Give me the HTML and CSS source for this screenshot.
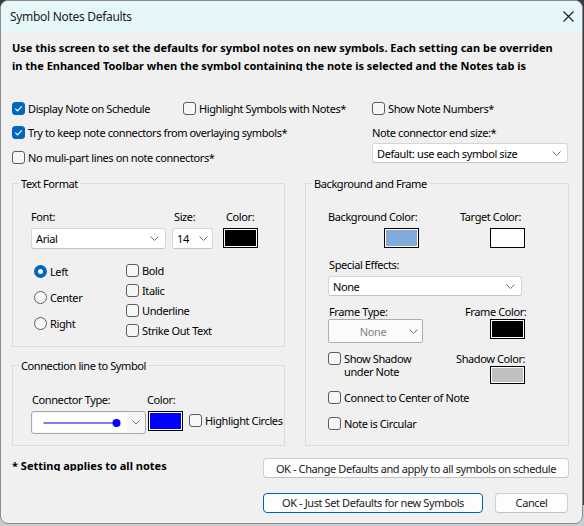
FILE: index.html
```html
<!DOCTYPE html>
<html>
<head>
<meta charset="utf-8">
<title>Symbol Notes Defaults</title>
<link rel="stylesheet" href="styles.css">
</head>
<body>
<div class="window">
  <div class="titlebar">
    <span class="title">Symbol Notes Defaults</span>
    <svg class="close" width="11" height="11" viewBox="0 0 11 11"><path d="M0.5 0.5 L10.5 10.5 M10.5 0.5 L0.5 10.5" stroke="#1b1b1b" stroke-width="1.1" fill="none"/></svg>
  </div>
  <div class="content">
    <div class="intro">Use this screen to set the defaults for symbol notes on new symbols. Each setting can be overriden<br>in the Enhanced Toolbar when the symbol containing the note is selected and the Notes tab is</div>

    <div class="opts">
      <div class="opts-left">
        <div class="row">
          <label class="chk w171"><span class="box on"><svg width="11" height="11" viewBox="0 0 11 11"><path d="M2.3 5.6 L4.5 7.8 L8.8 3.3" stroke="#fff" stroke-width="1.2" fill="none"/></svg></span>Display Note on Schedule</label>
          <label class="chk"><span class="box"></span>Highlight Symbols with Notes*</label>
        </div>
        <div class="row h25">
          <label class="chk"><span class="box on"><svg width="11" height="11" viewBox="0 0 11 11"><path d="M2.3 5.6 L4.5 7.8 L8.8 3.3" stroke="#fff" stroke-width="1.2" fill="none"/></svg></span>Try to keep note connectors from overlaying symbols*</label>
        </div>
        <div class="row h25">
          <label class="chk"><span class="box"></span>No muli-part lines on note connectors*</label>
        </div>
      </div>
      <div class="opts-right">
        <div class="row">
          <label class="chk"><span class="box"></span>Show Note Numbers*</label>
        </div>
        <div class="row">Note connector end size:*</div>
        <div class="combo sel-end"><span>Default: use each symbol size</span><svg class="chev" width="9" height="5" viewBox="0 0 9 5"><path d="M0.5 0.5 L4.5 4.5 L8.5 0.5" stroke="#707070" fill="none"/></svg></div>
      </div>
    </div>

    <div class="groups">
      <div class="col-left">
        <fieldset class="group tf">
          <legend>Text Format</legend>
          <div class="tf-top">
            <div class="field f-font">
              <div class="lbl">Font:</div>
              <div class="combo"><span>Arial</span><svg class="chev" width="9" height="5" viewBox="0 0 9 5"><path d="M0.5 0.5 L4.5 4.5 L8.5 0.5" stroke="#707070" fill="none"/></svg></div>
            </div>
            <div class="field f-size">
              <div class="lbl">Size:</div>
              <div class="combo"><span>14</span><svg class="chev" width="9" height="5" viewBox="0 0 9 5"><path d="M0.5 0.5 L4.5 4.5 L8.5 0.5" stroke="#707070" fill="none"/></svg></div>
            </div>
            <div class="field f-color">
              <div class="lbl">Color:</div>
              <div class="swatch black"></div>
            </div>
          </div>
          <div class="tf-bottom">
            <div class="radios">
              <label class="radio-row"><span class="radio on"></span>Left</label>
              <label class="radio-row"><span class="radio"></span>Center</label>
              <label class="radio-row"><span class="radio"></span>Right</label>
            </div>
            <div class="checks">
              <label class="chk check-row"><span class="box"></span>Bold</label>
              <label class="chk check-row"><span class="box"></span>Italic</label>
              <label class="chk check-row"><span class="box"></span>Underline</label>
              <label class="chk check-row"><span class="box"></span>Strike Out Text</label>
            </div>
          </div>
        </fieldset>

        <fieldset class="group conn">
          <legend>Connection line to Symbol</legend>
          <div class="conn-row">
            <div class="field f-ctype">
              <div class="lbl">Connector Type:</div>
              <div class="combo dark">
                <span class="line-item"><svg width="94" height="19" viewBox="0 0 94 19"><line x1="10.5" y1="10" x2="83" y2="10" stroke="#0000e0" stroke-width="1.2"/><circle cx="83.5" cy="10" r="4" fill="#0000ff"/></svg></span>
                <svg class="chev" width="8" height="5" viewBox="0 0 8 5"><path d="M0.5 0.5 L4 4 L7.5 0.5" stroke="#707070" fill="none"/></svg>
              </div>
            </div>
            <div class="field f-ccolor">
              <div class="lbl">Color:</div>
              <div class="swatch blue"></div>
            </div>
            <div class="field f-hl">
              <div class="lbl"></div>
              <label class="chk check-row"><span class="box"></span>Highlight Circles</label>
            </div>
          </div>
        </fieldset>
      </div>

      <fieldset class="group bf">
        <legend>Background and Frame</legend>
        <div class="bf-row1">
          <div class="field f-bg">
            <div class="lbl">Background Color:</div>
            <div class="swatch ltblue"></div>
          </div>
          <div class="field f-tg">
            <div class="lbl">Target Color:</div>
            <div class="swatch white"></div>
          </div>
        </div>
        <div class="bf-se">
          <div class="lbl">Special Effects:</div>
          <div class="combo"><span>None</span><svg class="chev" width="9" height="5" viewBox="0 0 9 5"><path d="M0.5 0.5 L4.5 4.5 L8.5 0.5" stroke="#707070" fill="none"/></svg></div>
        </div>
        <div class="bf-frame">
          <div class="field f-ft">
            <div class="lbl">Frame Type:</div>
            <div class="combo disabled"><span class="dis-text">None</span><svg class="chev" width="9" height="5" viewBox="0 0 9 5"><path d="M0.5 0.5 L4.5 4.5 L8.5 0.5" stroke="#707070" fill="none"/></svg></div>
          </div>
          <div class="field f-fc">
            <div class="lbl">Frame Color:</div>
            <div class="swatch black"></div>
          </div>
        </div>
        <div class="bf-shadow">
          <div class="field f-sh">
            <label class="chk top"><span class="box"></span><span class="two">Show Shadow<br>under Note</span></label>
          </div>
          <div class="field f-sc">
            <div class="lbl tight">Shadow Color:</div>
            <div class="swatch gray"></div>
          </div>
        </div>
        <div class="bf-opt"><label class="chk"><span class="box"></span>Connect to Center of Note</label></div>
        <div class="bf-opt"><label class="chk"><span class="box"></span>Note is Circular</label></div>
      </fieldset>
    </div>

    <div class="bottom">
      <div class="footnote">* Setting applies to all notes</div>
      <div class="buttons">
        <div class="btn">OK - Change Defaults and apply to all symbols on schedule</div>
        <div class="btn-row">
          <div class="btn btn-def">OK - Just Set Defaults for new Symbols</div>
          <div class="btn btn-cancel">Cancel</div>
        </div>
      </div>
    </div>
  </div>
</div>
</body>
</html>
```
FILE: styles.css
```css
* { box-sizing: border-box; }
html, body { margin: 0; padding: 0; }
body {
  width: 584px;
  height: 526px;
  overflow: hidden;
  background: linear-gradient(#3b3b3b 0, #3b3b3b 505px, #c9ccd1 505px);
  font-family: "Noto Sans", sans-serif;
  font-size: 11px;
  letter-spacing: -0.4px;
  color: #000;
}
.window {
  width: 583px;
  height: 524px;
  background: #f0f0f0;
  border: 1px solid #8c8c8c;
  border-radius: 8px;
  overflow: hidden;
}
.titlebar {
  height: 31px;
  background: #e6f7fa;
  display: flex;
  align-items: center;
  justify-content: space-between;
  padding: 0 8px 0 9px;
}
.title { font-size: 12px; color: #1b1b1b; letter-spacing: -0.3px; }
.close { margin-top: -1px; }

.content { padding: 0 13px 0 11px; }

.intro {
  margin-top: 7px;
  font-weight: bold;
  letter-spacing: 0;
  line-height: 18px;
  height: 32px;
  overflow: hidden;
  white-space: nowrap;
}

.opts { display: flex; margin-top: 25px; }
.opts-left { width: 360px; flex: none; display: flex; flex-direction: column; }
.opts-right { flex: 1; display: flex; flex-direction: column; }
.row { display: flex; align-items: center; height: 24px; white-space: nowrap; }
.row.h25 { height: 25px; }
.w171 { width: 171px; flex: none; }

.chk { display: flex; align-items: center; gap: 3px; white-space: nowrap; }
.chk.top { align-items: flex-start; }
.box {
  width: 13px; height: 13px; flex: none;
  border: 1px solid #5c5c5c;
  border-radius: 3px;
  background: #f7f7f7;
  display: flex; align-items: center; justify-content: center;
}
.box.on { background: #0067c0; border-color: #0067c0; }
.two { line-height: 13px; }

.radio {
  width: 13px; height: 13px; flex: none;
  border: 1px solid #5c5c5c;
  border-radius: 50%;
  background: #f7f7f7;
}
.radio.on {
  background: #fff;
  border: 4px solid #0067c0;
}

.combo {
  display: flex; align-items: center; justify-content: space-between;
  background: #fff;
  border: 1px solid #d6d6d6;
  border-bottom-color: #c4c4c4;
  border-radius: 3px;
  padding: 0 5px 0 4px;
  white-space: nowrap;
}
.combo.dark { border-color: #a8a8a8; background: #f5f5f5; padding: 0 5px 0 1px; }
.combo.disabled { border-color: #adadad; background: #fbfbfb; border-radius: 2px; padding-right: 4px; }
.dis-text { flex: 1; text-align: center; color: #838383; padding-left: 4px; }
.chev { flex: none; }
.line-item { display: block; width: 94px; height: 19px; background: #fff; }
.line-item svg { display: block; }

.sel-end { width: 196px; height: 20px; margin-top: -1px; padding-right: 6px; }

.swatch {
  width: 35px; height: 20px;
  border: 1px solid #000;
  box-shadow: inset 0 0 0 1px #fff;
}
.swatch.black { background: #000; }
.swatch.blue { background: #0000ff; }
.swatch.ltblue { background: #80aad7; }
.swatch.white { background: #fff; }
.swatch.gray { background: #c0c0c0; }

fieldset.group {
  margin: 0;
  padding: 0;
  border: 1px solid #dcdcdc;
  min-width: 0;
}
legend {
  margin-left: 6px;
  padding: 0 2px;
  line-height: 15px;
  font-size: 11px;
}
.groups { display: flex; gap: 20px; margin-top: 6px; }
.col-left { width: 273px; flex: none; display: flex; flex-direction: column; }
fieldset.tf { height: 171px; }
fieldset.conn { height: 88px; margin-top: 11px; }
fieldset.bf { width: 264px; height: 270px; }

.field { display: flex; flex-direction: column; }
.lbl { height: 15px; line-height: 15px; white-space: nowrap; }
.lbl.tight { height: 13px; line-height: 13px; }

.tf-top { display: flex; margin-top: 18px; padding-left: 18px; }
.f-font { width: 135px; }
.f-font .combo { margin-top: 4px; height: 21px; padding-right: 6px; }
.f-size { width: 41px; margin-left: 6px; }
.f-size .lbl { padding-left: 2px; }
.f-size .combo { margin-top: 4px; height: 21px; padding-right: 4px; }
.f-color { margin-left: 10px; }
.f-color .lbl { padding-left: 3px; }
.f-color .swatch { margin-top: 4px; }

.tf-bottom { display: flex; margin-top: 9px; padding-left: 21px; }
.radios { width: 92px; display: flex; flex-direction: column; }
.radio-row { height: 26px; display: flex; align-items: center; gap: 3px; }
.checks { display: flex; flex-direction: column; margin-top: 2.5px; }
.check-row { height: 20px; }

.conn-row { display: flex; margin-top: 18.5px; padding-left: 18px; }
.f-ctype { width: 115px; }
.f-ctype .lbl { padding-left: 1px; }
.f-ctype .combo { margin-top: 4px; height: 23px; }
.f-ccolor { margin-left: 1px; }
.f-ccolor .swatch { margin-top: 4px; margin-left: 1px; }
.f-hl { margin-left: 6px; }
.f-hl .check-row { margin-top: 4px; }

.bf-row1 { display: flex; margin-top: 18px; padding-left: 22px; }
.f-bg { width: 132px; }
.f-bg .swatch { margin-top: 4px; margin-left: 56px; }
.f-tg .swatch { margin-top: 4px; margin-left: 30px; }

.bf-se { margin-top: 8.5px; padding-left: 22px; }
.bf-se .lbl { padding-left: 1px; }
.bf-se .combo { width: 194px; height: 20px; margin-top: 4.5px; padding-right: 6px; }

.bf-frame { display: flex; margin-top: 7.5px; padding-left: 22px; }
.f-ft { width: 137px; }
.f-ft .lbl { padding-left: 1px; }
.f-ft .combo { width: 95px; height: 24px; margin-top: 0.5px; }
.f-fc .swatch { margin-top: 0.5px; margin-left: 25px; }

.bf-shadow { display: flex; margin-top: 9px; padding-left: 22px; height: 32px; }
.f-sh { width: 128px; flex: none; }
.f-sc .swatch { margin-top: 1px; margin-left: 34px; }

.bf-opt { height: 26px; display: flex; align-items: center; padding-left: 22px; }

.bottom { display: flex; justify-content: space-between; margin-top: 12px; }
.footnote { font-weight: bold; letter-spacing: 0; line-height: 15px; height: 13px; overflow: hidden; white-space: nowrap; }
.buttons { width: 306px; flex: none; display: flex; flex-direction: column; }
.btn {
  height: 20px;
  background: #fdfdfd;
  border: 1px solid #d0d0d0;
  border-bottom-color: #c2c2c2;
  border-radius: 4px;
  display: flex; align-items: center; justify-content: center;
  white-space: nowrap;
  overflow: hidden;
  color: #1a1a1a;
}
.btn-row { display: flex; justify-content: space-between; margin-top: 14.5px; }
.btn-def { width: 220px; border-color: #005fb8; }
.btn-cancel { width: 73px; margin-right: 1px; }
```
